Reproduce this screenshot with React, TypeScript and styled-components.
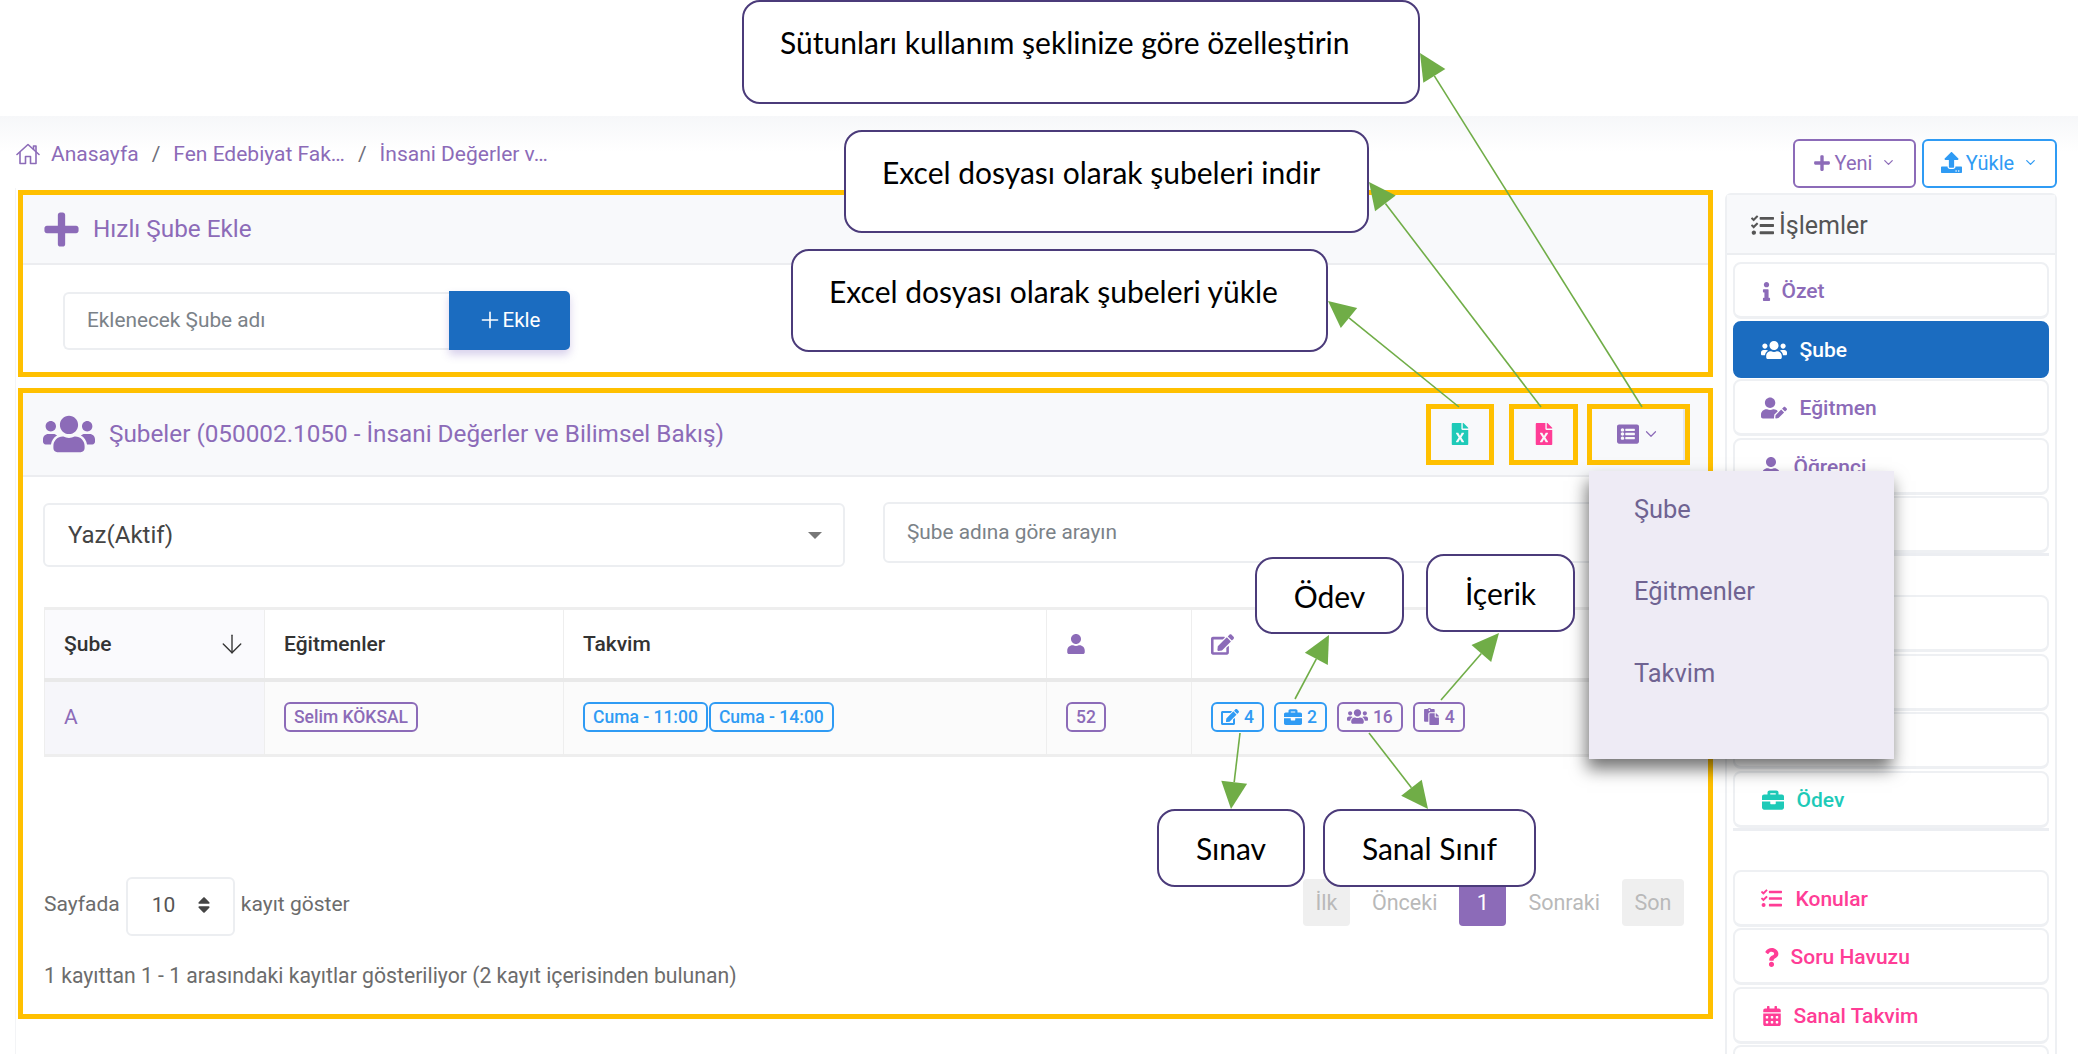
import React from 'react';
import styled, { createGlobalStyle } from 'styled-components';
import { Plus, ChevronDown, ArrowDown } from 'lucide-react';
import {
  FaPlus, FaUpload, FaUsers, FaInfo, FaUserEdit, FaUser, FaBriefcase, FaTasks, FaQuestion,
  FaCalendarAlt, FaFileExcel, FaListAlt, FaEdit, FaPaste, FaSort,
} from 'react-icons/fa';

const purple = '#8c6bb8';
const blue = '#2f9bf4';
const teal = '#1ecab8';
const pink = '#ff3d96';
const navy = '#1b6cc0';

const Global = createGlobalStyle`
  html, body { margin: 0; padding: 0; background: #fff; }
  body { font-family: Roboto, "Liberation Sans", sans-serif; }
  * { box-sizing: border-box; }
`;

const Stage = styled.div`
  position: relative;
  width: 2078px;
  height: 1054px;
  overflow: hidden;
  background: #fff;
`;
const TopBlank = styled.div`height: 116px; background: #fff;`;
const Page = styled.div`
  height: 938px;
  padding: 23px 21px 0 16px;
  background: linear-gradient(#f6f7f9, #fff 36px);
`;
const TopBar = styled.div`
  display: flex;
  justify-content: space-between;
  height: 49px;
`;
const Crumbs = styled.nav`
  display: flex;
  align-items: center;
  height: 29px;
  font-size: 21px;
  color: ${purple};
`;
const CrumbSep = styled.span`margin: 0 13px; color: #6f6f7a;`;
const CrumbIcon = styled.svg`margin-right: 11px; color: ${purple};`;
const TopActions = styled.div`display: flex; gap: 6px;`;
const TopButton = styled.button<{ $c: string; $w: number }>`
  width: ${(p) => p.$w}px;
  height: 49px;
  display: flex;
  align-items: center;
  justify-content: center;
  gap: 4px;
  background: #fff;
  border: 2px solid ${(p) => p.$c};
  border-radius: 6px;
  color: ${(p) => p.$c};
  font: 400 20px Roboto, sans-serif;
  padding: 0 0 2px;
`;
const Columns = styled.div`
  display: grid;
  grid-template-columns: 1695px 332px;
  column-gap: 12px;
  margin-left: -1px;
  padding-left: 2px;
  border-left: 1px solid #f3f4f6;
`;
const MainCol = styled.main`margin-top: 2px;`;
const Frame = styled.section<{ $h: number }>`
  height: ${(p) => p.$h}px;
  border: 5px solid #ffc000;
  background: #fff;
  margin-bottom: 11px;
`;
const CardHead = styled.header<{ $h: number; $left: number }>`
  height: ${(p) => p.$h}px;
  display: flex;
  align-items: center;
  padding: 0 13px 0 ${(p) => p.$left}px;
  background: #f8f9fb;
  border-bottom: 2px solid #ecedf0;
  color: ${purple};
`;
const HeadTitle = styled.h2<{ $gap: number }>`
  margin: 0 0 2px ${(p) => p.$gap}px;
  font: 400 24.3px Roboto, sans-serif;
  color: ${purple};
  flex: 1;
`;
const QuickForm = styled.form`display: flex; padding: 27px 0 0 40px;`;
const QuickInput = styled.div`
  width: 386px;
  height: 58px;
  display: flex;
  align-items: center;
  padding: 0 0 2px 22px;
  border: 2px solid #eceef1;
  border-right: 0;
  border-radius: 6px 0 0 6px;
  font-size: 20.8px;
  color: #7b8288;
`;
const AddButton = styled.button`
  width: 121px;
  height: 59px;
  margin-top: -1px;
  display: flex;
  align-items: center;
  justify-content: center;
  gap: 0;
  border: 0;
  padding: 0 2px 1px 0;
  border-radius: 0 5px 5px 0;
  background: ${navy};
  color: #fff;
  font: 400 20.5px Roboto, sans-serif;
  box-shadow: 0 5px 9px rgba(100, 70, 180, 0.25);
`;
const ToolGroup = styled.div`display: flex; margin-right: 5px;`;
const ToolBox = styled.div<{ $w: number; $gap: number; $edge?: boolean }>`
  width: ${(p) => p.$w}px;
  height: 61px;
  margin-left: ${(p) => p.$gap}px;
  display: flex;
  align-items: center;
  justify-content: center;
  gap: 3px;
  border: 5px solid #ffc000;
  color: ${purple};
  box-shadow: ${(p) => (p.$edge ? 'inset -2px 0 0 #e4e6ec' : 'none')};
`;
const ListBody = styled.div`padding: 26px 18px 0 20px;`;
const Filters = styled.div`display: flex; gap: 38px; height: 77px;`;
const SelectBox = styled.div`
  width: 802px;
  height: 64px;
  display: flex;
  align-items: center;
  justify-content: space-between;
  padding: 0 21px 0 23px;
  border: 2px solid #eceef1;
  border-radius: 6px;
  font-size: 24px;
  color: #444;
`;
const Caret = styled.span`
  width: 0;
  height: 0;
  border-left: 7px solid transparent;
  border-right: 7px solid transparent;
  border-top: 7px solid #777;
`;
const SearchBox = styled.div`
  width: 802px;
  height: 61px;
  margin-top: -1px;
  display: flex;
  align-items: center;
  padding: 0 0 1px 22px;
  border: 2px solid #eceef1;
  border-radius: 6px;
  font-size: 20.8px;
  color: #7b8288;
`;
const Table = styled.div`margin: 27px 0 0 1px;`;
const THead = styled.div`
  display: grid;
  grid-template-columns: 220px 299px 483px 145px 1fr;
  height: 75px;
  border-top: 3px solid #eeeeee;
  border-bottom: 4px solid #e9e9e9;
  color: #333;
  font-size: 21px;
  font-weight: 500;
`;
const TRow = styled.div`
  display: grid;
  grid-template-columns: 220px 299px 483px 145px 1fr;
  height: 75px;
  background: #fbfbfb;
  border-bottom: 3px solid #eeeeee;
`;
const Th = styled.div`
  display: flex;
  align-items: center;
  justify-content: space-between;
  padding: 0 17px 0 19px;
  border-left: 1px solid #eeeeee;
  &:first-child { background: #fafafd; }
`;
const Td = styled.div<{ $head?: boolean }>`
  display: flex;
  align-items: center;
  padding: 0 0 3px 19px;
  border-left: 1px solid #eeeeee;
  background: ${(p) => (p.$head ? '#f6f6fa' : 'transparent')};
  color: ${purple};
  font-size: 21px;
`;
const Tag = styled.span<{ $c: string; $ml?: number }>`
  display: inline-flex;
  align-items: center;
  height: 30px;
  gap: 5px;
  margin-left: ${(p) => p.$ml ?? 0}px;
  padding: 0 8px;
  border: 2px solid ${(p) => p.$c};
  border-radius: 6px;
  color: ${(p) => p.$c};
  font-size: 17.5px;
  font-weight: 500;
  white-space: nowrap;
`;
const Footer = styled.div`
  display: flex;
  justify-content: space-between;
  margin: 120px 0 0 1px;
  height: 59px;
`;
const PerPage = styled.div`
  display: flex;
  align-items: center;
  gap: 6px;
  font-size: 21px;
  color: #6c6c6c;
`;
const PerPageLabel = styled.span`margin-bottom: 5px;`;
const PerPageBox = styled.div`
  width: 109px;
  height: 59px;
  display: flex;
  align-items: center;
  justify-content: space-between;
  padding: 0 19px 4px 24px;
  border: 2px solid #eceef1;
  border-radius: 6px;
  color: #555;
`;
const Pager = styled.div`
  display: flex;
  align-items: center;
  height: 47px;
  margin: 2px 6px 0 0;
  gap: 22px;
  font-size: 21.5px;
  color: #b9b9b9;
`;
const PageBtn = styled.span<{ $w: number; $on?: boolean }>`
  width: ${(p) => p.$w}px;
  height: 47px;
  display: flex;
  align-items: center;
  justify-content: center;
  border-radius: 4px;
  background: ${(p) => (p.$on ? purple : '#efefef')};
  color: ${(p) => (p.$on ? '#fff' : '#b9b9b9')};
`;
const Info = styled.div`
  margin: 27px 0 0 1px;
  font-size: 21.2px;
  color: #6c6c6c;
`;
const Side = styled.aside`
  margin-top: 5px;
  height: 870px;
  background: #fff;
  border: 2px solid #eef0f3;
  border-bottom: 0;
  border-radius: 6px 6px 0 0;
`;
const SideHead = styled.header`
  height: 60px;
  display: flex;
  align-items: center;
  gap: 5px;
  padding: 2px 0 0 24px;
  background: #f8f9fb;
  border-bottom: 2px solid #eceef1;
  font-size: 25px;
  color: #555;
`;
const SideGroup = styled.div<{ $top: number; $line?: boolean }>`
  display: flex;
  flex-direction: column;
  gap: 1.5px;
  margin: ${(p) => p.$top}px 6px 0 5.5px;
  border-bottom: ${(p) => (p.$line ? '3px solid #eceef2' : '0')};
`;
const SideItem = styled.a<{ $c: string; $active?: boolean; $gap: number; $pad?: number }>`
  flex: none;
  height: 57px;
  display: flex;
  align-items: center;
  gap: ${(p) => p.$gap}px;
  padding: 2px 0 0 ${(p) => p.$pad ?? 26}px;
  background: ${(p) => (p.$active ? navy : '#fff')};
  border: 2px solid ${(p) => (p.$active ? navy : '#eef0f3')};
  border-bottom-width: 3px;
  border-radius: 8px;
  color: ${(p) => (p.$active ? '#fff' : p.$c)};
  font-size: 21px;
  font-weight: 500;
`;
const Popup = styled.div`
  position: absolute;
  left: 1589px;
  top: 471px;
  width: 305px;
  height: 288px;
  padding: 0 0 0 45px;
  background: #eeebf5;
  box-shadow: -2px 10px 16px rgba(0, 0, 0, 0.55);
  font-size: 25.4px;
  color: #6f6392;
`;
const PopupItem = styled.div`
  height: 82px;
  padding-bottom: 6px;
  display: flex;
  align-items: center;
`;
const Callout = styled.div<{ $l: number; $t: number; $w: number; $h: number; $center?: boolean; $pad?: number }>`
  position: absolute;
  left: ${(p) => p.$l}px;
  top: ${(p) => p.$t}px;
  width: ${(p) => p.$w}px;
  height: ${(p) => p.$h}px;
  display: flex;
  align-items: center;
  justify-content: ${(p) => (p.$center ? 'center' : 'flex-start')};
  padding: 0 0 ${(p) => p.$pad ?? 0}px ${(p) => (p.$center ? 0 : 36)}px;
  background: #fff;
  border: 2px solid #4b3b7a;
  border-radius: 18px;
  font: 400 30px Lato, sans-serif;
  color: #000;
  white-space: nowrap;
`;
const ArrowLayer = styled.svg`
  position: absolute;
  left: 0;
  top: 0;
  pointer-events: none;
`;

function Arrow({ x1, y1, x2, y2 }: { x1: number; y1: number; x2: number; y2: number }) {
  const len = Math.hypot(x2 - x1, y2 - y1);
  const ux = (x2 - x1) / len;
  const uy = (y2 - y1) / len;
  const bx = x2 - ux * 27;
  const by = y2 - uy * 27;
  const px = -uy * 13;
  const py = ux * 13;
  return (
    <g>
      <line x1={x1} y1={y1} x2={bx} y2={by} stroke="#70ad47" strokeWidth="1.6" />
      <polygon points={`${x2},${y2} ${bx + px},${by + py} ${bx - px},${by - py}`} fill="#70ad47" />
    </g>
  );
}

const arrows = [
  [1642, 407, 1420, 53],
  [1541, 407, 1369, 182],
  [1459, 407, 1328, 301],
  [1295, 699, 1329, 635],
  [1441, 700, 1499, 633],
  [1240, 733, 1231, 809],
  [1369, 733, 1428, 809],
];

export default function App() {
  return (
    <Stage>
      <Global />
      <TopBlank />
      <Page>
        <TopBar>
          <Crumbs>
            <CrumbIcon width="24" height="22" viewBox="0 0 24 22" fill="none" stroke="currentColor" strokeWidth="1.6" strokeLinejoin="round" strokeLinecap="round">
              <path d="M1 11.5 12 1.5l11 10" />
              <path d="M17.5 6V3h2.5v5.5" />
              <path d="M4 9.5v11h5.5v-7h5v7H20v-11" />
            </CrumbIcon>
            <span>Anasayfa</span>
            <CrumbSep>/</CrumbSep>
            <span>Fen Edebiyat Fak…</span>
            <CrumbSep>/</CrumbSep>
            <span>İnsani Değerler v…</span>
          </Crumbs>
          <TopActions>
            <TopButton $c={purple} $w={123}><FaPlus size={18} />Yeni<ChevronDown size={15} style={{ marginLeft: 5 }} /></TopButton>
            <TopButton $c={blue} $w={135}><FaUpload size={21} />Yükle<ChevronDown size={15} style={{ marginLeft: 5 }} /></TopButton>
          </TopActions>
        </TopBar>
        <Columns>
          <MainCol>
            <Frame $h={187}>
              <CardHead $h={70} $left={19}>
                <FaPlus size={39} />
                <HeadTitle $gap={12}>Hızlı Şube Ekle</HeadTitle>
              </CardHead>
              <QuickForm>
                <QuickInput>Eklenecek Şube adı</QuickInput>
                <AddButton type="button"><Plus size={26} strokeWidth={1.5} />Ekle</AddButton>
              </QuickForm>
            </Frame>
            <Frame $h={631}>
              <CardHead $h={84} $left={20}>
                <FaUsers size={52} />
                <HeadTitle $gap={14}>Şubeler (050002.1050 - İnsani Değerler ve Bilimsel Bakış)</HeadTitle>
                <ToolGroup>
                  <ToolBox $w={68} $gap={0}><FaFileExcel size={22} color={teal} /></ToolBox>
                  <ToolBox $w={69} $gap={15}><FaFileExcel size={22} color={pink} /></ToolBox>
                  <ToolBox $w={103} $gap={9} $edge><FaListAlt size={22} /><ChevronDown size={18} strokeWidth={1.6} /></ToolBox>
                </ToolGroup>
              </CardHead>
              <ListBody>
                <Filters>
                  <SelectBox>Yaz(Aktif)<Caret /></SelectBox>
                  <SearchBox>Şube adına göre arayın</SearchBox>
                </Filters>
                <Table>
                  <THead>
                    <Th>Şube<ArrowDown size={30} strokeWidth={1.1} /></Th>
                    <Th>Eğitmenler</Th>
                    <Th>Takvim</Th>
                    <Th><FaUser size={20} color={purple} /></Th>
                    <Th><FaEdit size={23} color={purple} /></Th>
                  </THead>
                  <TRow>
                    <Td $head>A</Td>
                    <Td><Tag $c={purple}>Selim KÖKSAL</Tag></Td>
                    <Td><Tag $c={blue}>Cuma - 11:00</Tag><Tag $c={blue} $ml={1}>Cuma - 14:00</Tag></Td>
                    <Td><Tag $c={purple}>52</Tag></Td>
                    <Td>
                      <Tag $c={blue}><FaEdit size={18} />4</Tag>
                      <Tag $c={blue} $ml={10}><FaBriefcase size={18} />2</Tag>
                      <Tag $c={purple} $ml={10}><FaUsers size={21} />16</Tag>
                      <Tag $c={purple} $ml={10}><FaPaste size={17} />4</Tag>
                    </Td>
                  </TRow>
                </Table>
                <Footer>
                  <PerPage>
                    <PerPageLabel>Sayfada</PerPageLabel>
                    <PerPageBox>10<FaSort size={20} color="#444" /></PerPageBox>
                    <PerPageLabel>kayıt göster</PerPageLabel>
                  </PerPage>
                  <Pager>
                    <PageBtn $w={47}>İlk</PageBtn>
                    <span>Önceki</span>
                    <PageBtn $w={47} $on>1</PageBtn>
                    <span>Sonraki</span>
                    <PageBtn $w={62}>Son</PageBtn>
                  </Pager>
                </Footer>
                <Info>1 kayıttan 1 - 1 arasındaki kayıtlar gösteriliyor (2 kayıt içerisinden bulunan)</Info>
              </ListBody>
            </Frame>
          </MainCol>
          <Side>
            <SideHead><FaTasks size={23} />İşlemler</SideHead>
            <SideGroup $top={7} $line>
              <SideItem $c={purple} $gap={6} $pad={22}><FaInfo size={19} />Özet</SideItem>
              <SideItem $c={purple} $gap={13} $active><FaUsers size={26} />Şube</SideItem>
              <SideItem $c={purple} $gap={13}><FaUserEdit size={26} />Eğitmen</SideItem>
              <SideItem $c={purple} $gap={13}><FaUser size={20} />Öğrenci</SideItem>
              <SideItem $c={purple} $gap={13}><FaFileExcel size={20} />Grup</SideItem>
            </SideGroup>
            <SideGroup $top={39} $line>
              <SideItem $c={teal} $gap={11}><FaEdit size={20} />Sınav</SideItem>
              <SideItem $c={teal} $gap={11}><FaUsers size={20} />Sanal Sınıf</SideItem>
              <SideItem $c={teal} $gap={11}><FaPaste size={20} />İçerik</SideItem>
              <SideItem $c={teal} $gap={13} $pad={27}><FaBriefcase size={22} />Ödev</SideItem>
            </SideGroup>
            <SideGroup $top={39}>
              <SideItem $c={pink} $gap={14}><FaTasks size={21} />Konular</SideItem>
              <SideItem $c={pink} $gap={10} $pad={27}><FaQuestion size={19} />Soru Havuzu</SideItem>
              <SideItem $c={pink} $gap={12} $pad={27}><FaCalendarAlt size={20} />Sanal Takvim</SideItem>
              <SideItem $c={pink} $gap={13} />
            </SideGroup>
          </Side>
        </Columns>
      </Page>
      <Popup>
        <PopupItem>Şube</PopupItem>
        <PopupItem>Eğitmenler</PopupItem>
        <PopupItem>Takvim</PopupItem>
      </Popup>
      <ArrowLayer width="2078" height="1054">
        {arrows.map(([a, b, c, d], i) => <Arrow key={i} x1={a} y1={b} x2={c} y2={d} />)}
      </ArrowLayer>
      <Callout $l={742} $t={0} $w={678} $h={104} $pad={20}>Sütunları kullanım şeklinize göre özelleştirin</Callout>
      <Callout $l={844} $t={130} $w={525} $h={103} $pad={20}>Excel dosyası olarak şubeleri indir</Callout>
      <Callout $l={791} $t={249} $w={537} $h={103} $pad={20}>Excel dosyası olarak şubeleri yükle</Callout>
      <Callout $l={1255} $t={557} $w={149} $h={77} $center>Ödev</Callout>
      <Callout $l={1426} $t={554} $w={149} $h={78} $center>İçerik</Callout>
      <Callout $l={1157} $t={809} $w={148} $h={78} $center>Sınav</Callout>
      <Callout $l={1323} $t={809} $w={213} $h={78} $center>Sanal Sınıf</Callout>
    </Stage>
  );
}
